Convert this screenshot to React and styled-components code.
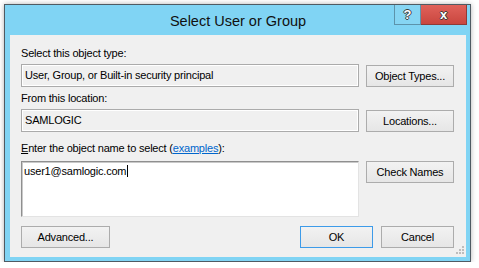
import React from 'react';
import styled, { createGlobalStyle } from 'styled-components';

const Global = createGlobalStyle`
    html, body {
        margin: 0;
        padding: 0;
        background: #fff;
    }
    body {
        font-family: "Liberation Sans", Arial, sans-serif;
    }
`

const Page = styled.div`
    padding: 4px 0 0 4px;
`

const Window = styled.div`
    width: 467px;
    height: 258px;
    box-sizing: border-box;
    border: 1px solid #4f5b63;
    background: #80d4f4;
    box-shadow: 0 0 5px rgba(0, 0, 0, 0.3);
    display: flex;
    flex-direction: column;
    padding: 0 4px 4px 5px;
`

const TitleBar = styled.div`
    height: 30px;
    display: grid;
    grid-template-columns: 1fr auto 1fr;
`

const Title = styled.div`
    grid-column: 2;
    align-self: center;
    padding-top: 2px;
    font-size: 14.5px;
    color: #111;
    white-space: nowrap;
`

const Controls = styled.div`
    grid-column: 3;
    justify-self: end;
    align-self: start;
    display: flex;
    margin-right: -1px;
`

const CapButton = styled.div`
    width: ${p => p.$w}px;
    height: 20px;
    box-sizing: border-box;
    border: 1px solid ${p => p.$close ? '#8e3b37' : '#5c93ab'};
    border-top: none;
    background: ${p => p.$close
        ? 'linear-gradient(#e0625a, #c9463f)'
        : '#86d5f3'};
    display: flex;
    align-items: center;
    justify-content: center;
    font-weight: bold;
    font-size: 13px;
    color: #fff;
    text-shadow: 1px 0 #3b3b3b, -1px 0 #3b3b3b, 0 1px #3b3b3b, 0 -1px #3b3b3b;
    & + & {
        border-left: none;
    }
`

const Client = styled.div`
    flex: 1;
    position: relative;
    background: #f0f0f0;
    padding: 11px 12px 0 11px;
    display: flex;
    flex-direction: column;
    font-size: 11px;
    color: #000;
`

const Label = styled.div`
    height: 15px;
    line-height: 15px;
    margin-top: ${p => p.$mt || 0}px;
    letter-spacing: -0.2px;
    white-space: nowrap;
`

const Link = styled.span`
    color: #0066cc;
    text-decoration: underline;
`

const Row = styled.div`
    display: grid;
    grid-template-columns: 338px 88px;
    column-gap: 7px;
    align-items: start;
    margin-top: ${p => p.$mt || 0}px;
`

const Field = styled.div`
    height: 23px;
    box-sizing: border-box;
    border: 1px solid #ababab;
    box-shadow: inset 0 0 0 1px #fff;
    padding: 0 3px;
    line-height: 21px;
    letter-spacing: -0.2px;
    white-space: nowrap;
`

const NameBox = styled.div`
    height: 56px;
    box-sizing: border-box;
    background: #fff;
    border-top: 1px solid #8f8f8f;
    border-left: 1px solid #8f8f8f;
    border-right: 1px solid #e3e3e3;
    border-bottom: 1px solid #e3e3e3;
    box-shadow: inset 1px 1px 0 #c9c9c9;
    padding: 2px 2px;
    line-height: 15px;
    letter-spacing: -0.2px;
`

const Caret = styled.span`
    display: inline-block;
    width: 1px;
    height: 12px;
    background: #000;
    vertical-align: -2px;
    margin-left: 1px;
`

const Button = styled.div`
    width: ${p => p.$w || 88}px;
    height: 22px;
    box-sizing: border-box;
    margin-top: ${p => p.$mt || 0}px;
    border: 1px solid ${p => p.$default ? '#3d9be9' : '#acacac'};
    background: linear-gradient(#f2f2f2, #e6e6e6);
    display: flex;
    align-items: center;
    justify-content: center;
    letter-spacing: -0.2px;
    white-space: nowrap;
`

const Footer = styled.div`
    display: flex;
    align-items: center;
    gap: 8px;
    margin-top: 9px;
`

const Spacer = styled.div`
    flex: 1;
`

const Grip = styled.svg`
    position: absolute;
    right: 2px;
    bottom: 3px;
`

const SizeGrip = () => {
    const dots = [[6, 0], [3, 3], [6, 3], [0, 6], [3, 6], [6, 6]];
    return (
        <Grip width="8" height="8" viewBox="0 0 8 8">
            {dots.map(([x, y]) => (
                <rect key={x + '-' + y} x={x} y={y} width="2" height="2" fill="#bdbdbd" />
            ))}
        </Grip>
    )
}

const App = () => {
    return (
        <Page>
            <Global />
            <Window>
                <TitleBar>
                    <Title>Select User or Group</Title>
                    <Controls>
                        <CapButton $w={27}>?</CapButton>
                        <CapButton $w={46} $close>x</CapButton>
                    </Controls>
                </TitleBar>
                <Client>
                    <Label>Select this object type:</Label>
                    <Row $mt={3}>
                        <Field>User, Group, or Built-in security principal</Field>
                        <Button $mt={1}>Object Types...</Button>
                    </Row>
                    <Label $mt={4}>From this location:</Label>
                    <Row $mt={3}>
                        <Field>SAMLOGIC</Field>
                        <Button $mt={1}>Locations...</Button>
                    </Row>
                    <Label $mt={9}>
                        <u>E</u>nter the object name to select (<Link>examples</Link>):
                    </Label>
                    <Row $mt={5}>
                        <NameBox>user1@samlogic.com<Caret /></NameBox>
                        <Button>Check Names</Button>
                    </Row>
                    <Footer>
                        <Button $w={89}>Advanced...</Button>
                        <Spacer />
                        <Button $w={73} $default>OK</Button>
                        <Button $w={73}>Cancel</Button>
                    </Footer>
                    <SizeGrip />
                </Client>
            </Window>
        </Page>
    )
}

export default App;
